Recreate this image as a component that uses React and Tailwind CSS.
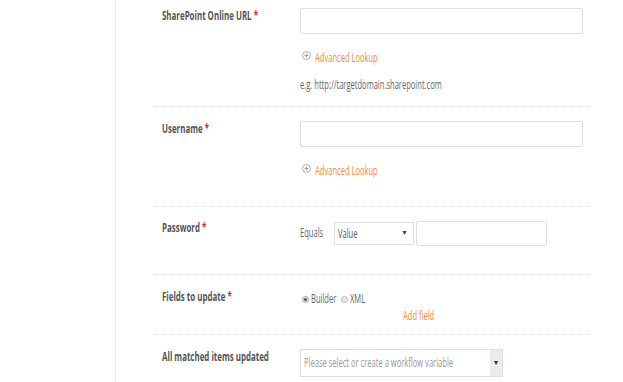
const T = ({ children, className = "scale-x-[0.63]" }) => (
  <span className={"inline-block origin-left whitespace-nowrap " + className}>{children}</span>
);

const Req = () => <span className="text-[#e2262b]"> *</span>;

const Label = ({ children, req, top }) => (
  <div className={"w-[147px] shrink-0 pl-[9px] text-[12px] leading-[14px] font-bold text-[#555] " + top}>
    <T className="scale-x-[0.66]">
      {children}
      {req && <Req />}
    </T>
  </div>
);

const Lookup = ({ className }) => (
  <div className={"flex items-center h-[16px] " + className}>
    <svg width="9" height="9" viewBox="0 0 9 9" className="ml-[2px] -mt-[5px]">
      <circle cx="4.5" cy="4.5" r="4" fill="none" stroke="#999" strokeWidth="0.8" />
      <path d="M4.5 2.5v4M2.5 4.5h4" stroke="#888" strokeWidth="0.8" />
    </svg>
    <div className="ml-[4px] text-[12px] text-[#f28b30]">
      <T>Advanced Lookup</T>
    </div>
  </div>
);

const Row = ({ children, className }) => (
  <div className={"flex border-b border-dotted border-[#e2e2e2] " + className}>{children}</div>
);

export default function App() {
  return (
    <div className="flex min-h-[382px] bg-white text-[#555]" style={{ fontFamily: '"Open Sans", "Liberation Sans", sans-serif' }}>
      <div className="w-[116px] shrink-0 border-r border-[#ececec]" />
      <div className="ml-[37px] w-[437px]">
        <Row className="h-[107px] pt-[8px]">
          <Label req top="pt-[1px]">SharePoint Online URL</Label>
          <div className="flex-1">
            <div className="w-[283px] h-[26px] border border-[#dedede] rounded-[2px]" />
            <Lookup className="mt-[16px]" />
            <div className="mt-[11px] h-[16px] text-[12px] leading-[16px] text-[#666]">
              <T>e.g. http://targetdomain.sharepoint.com</T>
            </div>
          </div>
        </Row>
        <Row className="h-[100px] pt-[14px]">
          <Label req top="pt-[1px]">Username</Label>
          <div className="flex-1">
            <div className="w-[283px] h-[26px] border border-[#dedede] rounded-[2px]" />
            <Lookup className="mt-[16px]" />
          </div>
        </Row>
        <Row className="h-[68px] pt-[14px]">
          <Label req top="pt-[0px]">Password</Label>
          <div className="flex-1 flex items-start">
            <div className="w-[34px] pt-[5px] text-[12px] leading-[14px] text-[#666]">
              <T>Equals</T>
            </div>
            <div className="w-[80px] h-[23px] mt-[1px] border border-[#dedede] flex items-center pl-[3px] pr-[5px] text-[12px] text-[#555]">
              <div className="flex-1 min-w-0">
                <T>Value</T>
              </div>
              <span className="text-[7px] text-[#444]">▼</span>
            </div>
            <div className="ml-[2px] w-[131px] h-[25px] border border-[#dedede] rounded-[2px]" />
          </div>
        </Row>
        <Row className="h-[60px] pt-[14px]">
          <Label req top="pt-[1px]">Fields to update</Label>
          <div className="flex-1 text-[12px] text-[#666]">
            <div className="flex items-center h-[18px] pt-[2px]">
              <span className="ml-[2px] w-[7px] h-[7px] rounded-full border border-[#aaa] bg-[#ddd] flex items-center justify-center">
                <span className="w-[3px] h-[3px] rounded-full bg-[#555]" />
              </span>
              <span className="ml-[2px] w-[30px]">
                <T>Builder</T>
              </span>
              <span className="w-[7px] h-[7px] rounded-full border border-[#bbb] bg-[#e6e6e6]" />
              <span className="ml-[2px]">
                <T>XML</T>
              </span>
            </div>
            <div className="ml-[103px] h-[16px] text-[#f28b30]">
              <T>Add field</T>
            </div>
          </div>
        </Row>
        <div className="flex pt-[14px]">
          <Label top="pt-[1px]">All matched items updated</Label>
          <div className="flex-1">
            <div className="w-[203px] h-[28px] border border-[#dedede] flex items-stretch text-[12px] text-[#999]">
              <div className="flex-1 min-w-0 overflow-hidden flex items-center pl-[3px]">
                <T>Please select or create a workflow variable</T>
              </div>
              <div className="w-[12px] shrink-0 bg-[#ececec] flex items-center justify-center text-[7px] text-[#333]">▼</div>
            </div>
          </div>
        </div>
      </div>
    </div>
  );
}
